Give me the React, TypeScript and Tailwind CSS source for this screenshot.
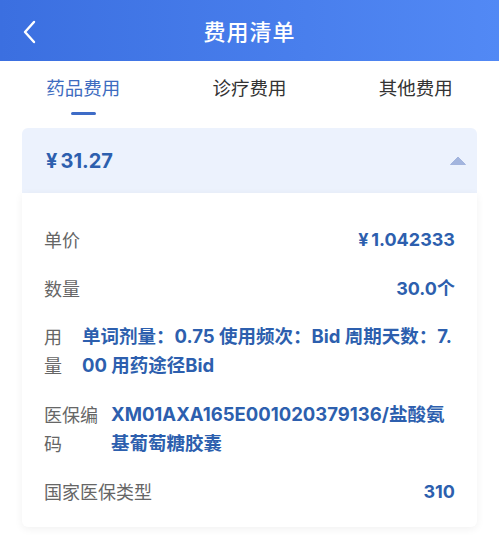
import React from "react";

const font = { fontFamily: '"Noto Sans CJK SC", "Noto Sans", sans-serif' };
const numFont = { fontFamily: 'Inter, "Noto Sans CJK SC", sans-serif' };

function Row({ label, value, labelW, multi }: { label: string; value: string; labelW?: string; multi?: boolean }) {
  if (multi) {
    return (
      <div className="flex text-[18px] leading-[29px]">
        <div className={`${labelW} shrink-0 text-[#666666] break-all`}>{label}</div>
        <div className="flex-1 min-w-0 font-bold text-[#2d5fae] break-all text-[18.5px]" style={numFont}>{value}</div>
      </div>
    );
  }
  return (
    <div className="flex justify-between text-[18px] leading-[29px]">
      <div className="text-[#666666]">{label}</div>
      <div className="font-bold text-[#2d5fae]" style={numFont}>{value}</div>
    </div>
  );
}

export default function App() {
  return (
    <div className="w-[499px] h-[535px] bg-white overflow-hidden" style={font}>
      <div className="h-[61px] bg-gradient-to-r from-[#3b6fe0] to-[#5289f5] relative flex items-center justify-center">
        <svg className="absolute left-[22px] top-[20px]" width="16" height="24" viewBox="0 0 16 24">
          <path d="M12 2 L3 12 L12 22" fill="none" stroke="white" strokeWidth="2.4" strokeLinecap="round" strokeLinejoin="round" />
        </svg>
        <div className="text-white text-[22px] font-medium tracking-[1px]">费用清单</div>
      </div>
      <div className="grid grid-cols-3 h-[64px] pt-[13px]">
        <div className="flex flex-col items-center">
          <div className="text-[18.5px] leading-[26px] text-[#3e6cc0]">药品费用</div>
          <div className="mt-[12px] w-[25px] h-[3px] rounded-full bg-[#3e6cc7]" />
        </div>
        <div className="flex flex-col items-center">
          <div className="text-[18.5px] leading-[26px] text-[#333333]">诊疗费用</div>
        </div>
        <div className="flex flex-col items-center">
          <div className="text-[18.5px] leading-[26px] text-[#333333]">其他费用</div>
        </div>
      </div>
      <div className="mx-[22px] mt-[3px]">
        <div className="h-[65px] bg-[#ecf2fd] rounded-t-[6px] flex items-center justify-between pl-[24px] pr-[10px]">
          <div className="text-[20px] font-bold text-[#2d5fae]" style={numFont}>¥&#8201;31.27</div>
          <svg width="18" height="10" viewBox="0 0 18 10">
            <path d="M9 1 L16.5 8.5 L1.5 8.5 Z" fill="#a3b5de" stroke="#a3b5de" strokeWidth="1" strokeLinejoin="round" />
          </svg>
        </div>
        <div className="bg-white shadow-[0_2px_8px_rgba(0,0,0,0.06)] rounded-b-[6px] pl-[22px] pr-[22px] pt-[32px] pb-[21px] flex flex-col gap-[19.5px]">
          <Row label="单价" value={"¥\u20091.042333"} />
          <Row label="数量" value="30.0个" />
          <Row label="用量" labelW="w-[20px] mr-[18px]" value="单词剂量：0.75 使用频次：Bid 周期天数：7.00 用药途径Bid" multi />
          <Row label="医保编码" labelW="w-[56px] mr-[11px]" value="XM01AXA165E001020379136/盐酸氨基葡萄糖胶囊" multi />
          <Row label="国家医保类型" value="310" />
        </div>
      </div>
    </div>
  );
}
